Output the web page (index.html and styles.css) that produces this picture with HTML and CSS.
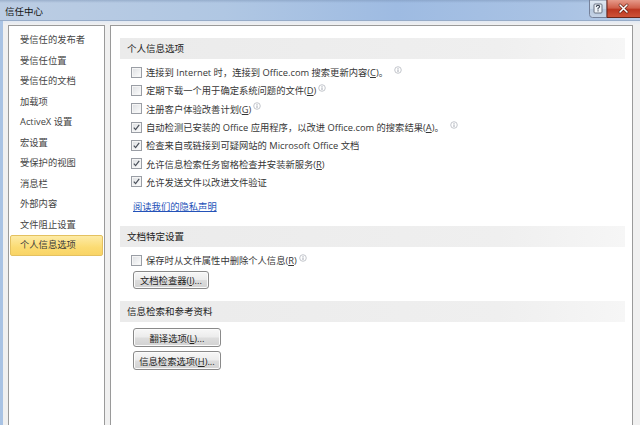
FILE: index.html
```html
<!DOCTYPE html>
<html lang="zh-CN">
<head>
<meta charset="utf-8">
<title>信任中心</title>
<link rel="stylesheet" href="styles.css">
</head>
<body>
<div class="window">
  <div class="titlebar">
    <span class="title">信任中心</span>
    <svg class="caption" width="51" height="18" viewBox="0 0 51 18">
      <defs>
        <linearGradient id="gHelp" x1="0" y1="0" x2="0" y2="1">
          <stop offset="0" stop-color="#e1e9f3"/>
          <stop offset="0.5" stop-color="#cbd8e8"/>
          <stop offset="0.51" stop-color="#b7c8de"/>
          <stop offset="1" stop-color="#c6d4e6"/>
        </linearGradient>
        <linearGradient id="gClose" x1="0" y1="0" x2="0" y2="1">
          <stop offset="0" stop-color="#e69a8a"/>
          <stop offset="0.45" stop-color="#d0604b"/>
          <stop offset="0.55" stop-color="#bb3620"/>
          <stop offset="1" stop-color="#cf5439"/>
        </linearGradient>
      </defs>
      <path d="M0.5 0 V14.5 Q0.5 17.5 3.5 17.5 H18 V0 Z" fill="url(#gHelp)" stroke="#75819a"/>
      <rect x="18" y="0" width="33" height="17.5" fill="url(#gClose)"/>
      <path d="M18 0 V17.5 H51" fill="none" stroke="#6a2418"/>
      <rect x="5" y="4" width="8" height="9" rx="1" fill="#eef3f8" stroke="#6a7382"/>
      <path d="M7.3 6.9 Q7.4 5.3 9 5.3 Q10.7 5.4 10.6 6.8 Q10.5 7.7 9.1 8.3 L9 9.5" fill="none" stroke="#3e4654" stroke-width="1.1"/>
      <rect x="8.5" y="10.3" width="1.1" height="1.1" fill="#3e4654"/>
      <path d="M31 5 L38 12 M38 5 L31 12" stroke="#5a1a10" stroke-width="2.8" stroke-linecap="round"/>
      <path d="M31 5 L38 12 M38 5 L31 12" stroke="#ffffff" stroke-width="1.6" stroke-linecap="round"/>
    </svg>
  </div>
  <div class="client">
    <nav class="side">
      <ul class="nav">
        <li>受信任的发布者</li>
        <li>受信任位置</li>
        <li>受信任的文档</li>
        <li>加载项</li>
        <li>ActiveX 设置</li>
        <li>宏设置</li>
        <li>受保护的视图</li>
        <li>消息栏</li>
        <li>外部内容</li>
        <li>文件阻止设置</li>
        <li class="selected">个人信息选项</li>
      </ul>
    </nav>
    <main class="content">
      <h2 class="sec-head">个人信息选项</h2>
      <ul class="checks">
        <li><span class="cb"></span><span class="lbl">连接到 Internet 时，连接到 Office.com 搜索更新内容(<u>C</u>)。</span><svg class="info gap" viewBox="0 0 9 9"><circle cx="4.5" cy="4.5" r="3.7" fill="#fff" stroke="#b4b8bf" stroke-width="0.9"/><rect x="4" y="3.8" width="1" height="3" fill="#9aa0aa"/><rect x="4" y="2.2" width="1" height="1" fill="#9aa0aa"/></svg></li>
        <li><span class="cb"></span><span class="lbl">定期下载一个用于确定系统问题的文件(<u>D</u>)</span><svg class="info" viewBox="0 0 9 9"><circle cx="4.5" cy="4.5" r="3.7" fill="#fff" stroke="#b4b8bf" stroke-width="0.9"/><rect x="4" y="3.8" width="1" height="3" fill="#9aa0aa"/><rect x="4" y="2.2" width="1" height="1" fill="#9aa0aa"/></svg></li>
        <li><span class="cb"></span><span class="lbl">注册客户体验改善计划(<u>G</u>)</span><svg class="info" viewBox="0 0 9 9"><circle cx="4.5" cy="4.5" r="3.7" fill="#fff" stroke="#b4b8bf" stroke-width="0.9"/><rect x="4" y="3.8" width="1" height="3" fill="#9aa0aa"/><rect x="4" y="2.2" width="1" height="1" fill="#9aa0aa"/></svg></li>
        <li><span class="cb checked"><svg viewBox="0 0 9 9"><path d="M1.8 4.6 L3.6 6.6 L7.2 1.8" fill="none" stroke="#4a505a" stroke-width="1.2"/></svg></span><span class="lbl">自动检测已安装的 Office 应用程序，以改进 Office.com 的搜索结果(<u>A</u>)。</span><svg class="info gap" viewBox="0 0 9 9"><circle cx="4.5" cy="4.5" r="3.7" fill="#fff" stroke="#b4b8bf" stroke-width="0.9"/><rect x="4" y="3.8" width="1" height="3" fill="#9aa0aa"/><rect x="4" y="2.2" width="1" height="1" fill="#9aa0aa"/></svg></li>
        <li><span class="cb checked"><svg viewBox="0 0 9 9"><path d="M1.8 4.6 L3.6 6.6 L7.2 1.8" fill="none" stroke="#4a505a" stroke-width="1.2"/></svg></span><span class="lbl">检查来自或链接到可疑网站的 Microsoft Office 文档</span></li>
        <li><span class="cb checked"><svg viewBox="0 0 9 9"><path d="M1.8 4.6 L3.6 6.6 L7.2 1.8" fill="none" stroke="#4a505a" stroke-width="1.2"/></svg></span><span class="lbl">允许信息检索任务窗格检查并安装新服务(<u>R</u>)</span></li>
        <li><span class="cb checked"><svg viewBox="0 0 9 9"><path d="M1.8 4.6 L3.6 6.6 L7.2 1.8" fill="none" stroke="#4a505a" stroke-width="1.2"/></svg></span><span class="lbl">允许发送文件以改进文件验证</span></li>
      </ul>
      <a class="privacy" href="#">阅读我们的隐私声明</a>

      <h2 class="sec-head sec-gap">文档特定设置</h2>
      <ul class="checks checks-2">
        <li><span class="cb"></span><span class="lbl">保存时从文件属性中删除个人信息(<u>R</u>)</span><svg class="info" viewBox="0 0 9 9"><circle cx="4.5" cy="4.5" r="3.7" fill="#fff" stroke="#b4b8bf" stroke-width="0.9"/><rect x="4" y="3.8" width="1" height="3" fill="#9aa0aa"/><rect x="4" y="2.2" width="1" height="1" fill="#9aa0aa"/></svg></li>
      </ul>
      <div class="btn-row">
        <button class="btn">文档检查器(<u>I</u>)...</button>
      </div>

      <h2 class="sec-head sec-gap-3">信息检索和参考资料</h2>
      <div class="btn-col">
        <button class="btn wide">翻译选项(<u>L</u>)...</button>
        <button class="btn wide">信息检索选项(<u>H</u>)...</button>
      </div>
    </main>
  </div>
</div>
</body>
</html>
```

FILE: styles.css
```css
* {
  box-sizing: border-box;
  margin: 0;
  padding: 0;
}

html, body {
  width: 640px;
  height: 425px;
  overflow: hidden;
}

body {
  font-family: "Open Sans", "Noto Sans CJK SC", sans-serif;
  font-size: 9.3px;
  color: #363636;
  background-color: #a9c3e4;
}

.window {
  width: 640px;
  height: 425px;
  display: flex;
  flex-direction: column;
  background-color: #a9c3e4;
}

/* ---------- title bar ---------- */
.titlebar {
  flex: none;
  width: 640px;
  height: 21px;
  display: flex;
  align-items: flex-start;
  background-color: #a9c3e4;
  background-image:
    linear-gradient(rgba(110,135,170,0.4) 0, rgba(110,135,170,0) 3px),
    linear-gradient(to right, #bccde3 0%, #b0c7e3 35%, #9ebbe2 62%, #aac3e4 88%, #b4c9e5 100%);
  border-bottom: 1px solid #97acc8;
}

.title {
  flex: 1;
  padding: 4px 0 0 5px;
  font-family: "Noto Sans CJK SC", sans-serif;
  font-size: 9.5px;
  line-height: 14px;
  color: #141414;
}

.caption {
  flex: none;
  display: block;
  width: 51px;
  height: 18px;
}

/* ---------- client area ---------- */
.client {
  flex: 1;
  display: flex;
  gap: 5px;
  margin-left: 3px;
  padding: 4px 7px 0 5px;
  background-color: #f0f0f0;
  background-image: linear-gradient(#e2e9f3, #f0f0f0 4px);
  min-height: 0;
}

.side {
  width: 97px;
  background: #ffffff;
  border: 1px solid #9a9a9a;
  border-bottom: 0;
}

.nav {
  list-style: none;
  padding-top: 4px;
}

.nav li {
  height: 20.5px;
  line-height: 20.5px;
  margin: 0 1px;
  padding-left: 10px;
  color: #444;
  white-space: nowrap;
}

.nav li.selected {
  background: linear-gradient(#fdeba6, #fbdb72 60%, #f9d466);
  border: 1px solid #e4c160;
  border-radius: 2px;
  line-height: 18.5px;
  padding-left: 9px;
  color: #3a3a3a;
}

.content {
  flex: 1;
  background: #ffffff;
  border: 1px solid #9a9a9a;
  border-bottom: 0;
  padding: 0 7px 0 9px;
}

.sec-head {
  margin-top: 12px;
  height: 21px;
  line-height: 21px;
  padding-left: 7px;
  font-size: 9.5px;
  font-weight: normal;
  color: #222;
  background: linear-gradient(to right, #ebebeb, #efefef 75%, #f6f6f6);
}

.sec-gap {
  margin-top: 10px;
}

.sec-gap-3 {
  margin-top: 12px;
}

.checks {
  list-style: none;
  margin-top: 4px;
}

.checks-2 {
  margin-top: 4px;
}

.checks li {
  height: 18.3px;
  display: flex;
  align-items: center;
  padding-left: 11px;
  white-space: nowrap;
}

.cb {
  width: 11px;
  height: 11px;
  flex: none;
  margin-right: 4px;
  border: 1px solid #9a9ea5;
  background: linear-gradient(135deg, #dcdee1, #f3f4f5 70%, #ffffff);
  box-shadow: inset 0 0 0 1px #f5f5f5;
  display: flex;
  align-items: center;
  justify-content: center;
}

.cb svg {
  width: 9px;
  height: 9px;
}

.lbl u {
  text-decoration: underline;
}

.info {
  width: 8px;
  height: 8px;
  margin-left: 2px;
  margin-top: -5px;
  flex: none;
}

.info.gap {
  margin-left: 6px;
}

.privacy {
  display: block;
  width: max-content;
  margin: 7px 0 0 13px;
  height: 18px;
  line-height: 18px;
  color: #2452b8;
  text-decoration: underline;
}

.btn-row {
  margin-top: 2px;
  padding-left: 13px;
}

.btn {
  height: 18px;
  padding: 0 6px;
  font-family: inherit;
  font-size: 9.3px;
  color: #222;
  white-space: nowrap;
  border: 1px solid #8a8a8a;
  border-radius: 3px;
  background: linear-gradient(#f7f7f7, #ececec 48%, #dddddd 52%, #d2d2d2);
  box-shadow: inset 0 0 0 1px #fbfbfb;
}

.btn-col {
  margin-top: 6px;
  padding-left: 13px;
  display: flex;
  flex-direction: column;
  align-items: flex-start;
  gap: 4px;
}

.btn.wide {
  width: 88px;
  height: 19px;
  padding: 0;
}
```
